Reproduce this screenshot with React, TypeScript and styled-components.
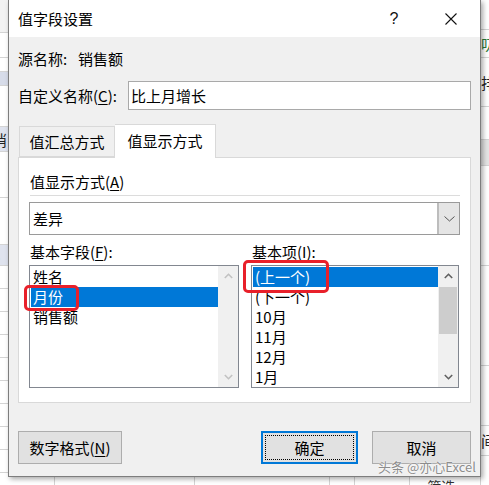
import React from "react";
import styled, { createGlobalStyle } from "styled-components";

const Global = createGlobalStyle`
  html, body { margin: 0; padding: 0; background: #fff; }
  body { font-family: "Noto Sans CJK SC", "Microsoft YaHei", sans-serif; }
  * { box-sizing: border-box; }
`;

const FONT = `"Noto Sans CJK SC", "Microsoft YaHei", sans-serif`;

const Screen = styled.div`
  position: relative;
  width: 489px;
  height: 485px;
  overflow: hidden;
  display: flex;
  background: #fff;
  font-family: ${FONT};
  font-size: 15px;
  color: #000;
`;

/* ---------- background sheet strips ---------- */
const SideStrip = styled.div`
  width: 8px;
  flex-shrink: 0;
  display: flex;
  flex-direction: column;
  overflow: hidden;
`;

const SheetCell = styled.div<{ $h: number; $bg?: string; $color?: string }>`
  height: ${(p) => p.$h}px;
  flex-shrink: 0;
  background: ${(p) => p.$bg || "#fff"};
  border-bottom: 1px solid #d4d4d4;
  font-size: 15px;
  line-height: ${(p) => p.$h}px;
  color: ${(p) => p.$color || "#222"};
  white-space: nowrap;
  overflow: hidden;
`;

const LeftText = styled.span`
  display: inline-block;
  margin-left: -8px;
`;

const Middle = styled.div`
  width: 473px;
  flex-shrink: 0;
  display: flex;
  flex-direction: column;
`;

const BottomStrip = styled.div`
  flex: 1;
  display: flex;
  background: #fff;
  font-size: 14px;
  line-height: 12px;
  color: #333;
`;

const BottomCell = styled.div<{ $w: number }>`
  width: ${(p) => p.$w}px;
  flex-shrink: 0;
  border-right: 1px solid #d4d4d4;
  overflow: hidden;
  white-space: nowrap;
  padding-top: 3px;
`;

/* ---------- dialog ---------- */
const Dialog = styled.div`
  position: relative;
  z-index: 1;
  width: 473px;
  height: 477px;
  flex-shrink: 0;
  background: #f0f0f0;
  border: 1px solid #7d7d7d;
  border-top: none;
  box-shadow: 2px 2px 5px rgba(0, 0, 0, 0.35);
  display: flex;
  flex-direction: column;
`;

const TitleBar = styled.div`
  height: 37px;
  background: #fff;
  display: flex;
  align-items: center;
  padding-left: 9px;
`;

const Title = styled.div`
  font-size: 15px;
  line-height: 20px;
  color: #000;
`;

const HelpBtn = styled.div`
  margin-left: auto;
  width: 30px;
  text-align: center;
  font-size: 16px;
  font-family: "Liberation Sans", Arial, sans-serif;
  color: #111;
`;

const CloseBtn = styled.div`
  width: 46px;
  margin-left: 19px;
  margin-right: 6px;
  display: flex;
  justify-content: center;
  align-items: center;
`;

const Body = styled.div`
  flex: 1;
  display: flex;
  flex-direction: column;
  padding: 0 9px;
`;

const SourceRow = styled.div`
  margin-top: 11px;
  height: 22px;
  display: flex;
  align-items: center;
  line-height: 22px;
`;

const RowLabel = styled.div<{ $w: number }>`
  width: ${(p) => p.$w}px;
  flex-shrink: 0;
  white-space: nowrap;
`;

const NameRow = styled.div`
  margin-top: 11px;
  height: 29px;
  display: flex;
  align-items: center;
`;

const TextInput = styled.div`
  flex: 1;
  height: 29px;
  background: #fff;
  border: 1px solid #a9a9a9;
  padding-left: 2px;
  line-height: 27px;
  font-size: 15px;
`;

const U = styled.span`
  text-decoration: underline;
  text-underline-offset: 2px;
`;

const Tabs = styled.div`
  margin-top: 14px;
  display: flex;
  align-items: flex-end;
  padding-left: 1px;
`;

const Tab = styled.div<{ $active?: boolean; $w: number }>`
  position: relative;
  z-index: ${(p) => (p.$active ? 2 : 1)};
  width: ${(p) => p.$w}px;
  height: ${(p) => (p.$active ? 34 : 31)}px;
  margin-bottom: ${(p) => (p.$active ? -1 : 0)}px;
  background: ${(p) => (p.$active ? "#fff" : "#f0f0f0")};
  border: 1px solid #d9d9d9;
  border-bottom: ${(p) => (p.$active ? "none" : "1px solid #d9d9d9")};
  border-left: ${(p) => (p.$active ? "none" : "1px solid #d9d9d9")};
  display: flex;
  align-items: center;
  justify-content: center;
  padding-bottom: ${(p) => (p.$active ? 2 : 0)}px;
  font-size: 15px;
`;

const Panel = styled.div`
  height: 246px;
  background: #fff;
  border: 1px solid #d9d9d9;
  padding: 0 10px;
  display: flex;
  flex-direction: column;
`;

const PanelLabel = styled.div`
  margin-top: 13px;
  height: 22px;
  line-height: 22px;
  padding-left: 1px;
`;

const Separator = styled.div`
  margin-top: 2px;
  margin-left: 1px;
  height: 1px;
  background: #dcdcdc;
`;

const Combo = styled.div`
  margin-top: 6px;
  height: 33px;
  border: 1px solid #9a9a9a;
  background: #fff;
  display: flex;
`;

const ComboText = styled.div`
  flex: 1;
  padding-left: 3px;
  line-height: 31px;
`;

const ComboBtn = styled.div`
  width: 22px;
  background: #e5e5e5;
  border-left: 2px solid #bdbdbd;
  display: flex;
  align-items: center;
  justify-content: center;
`;

const Columns = styled.div`
  margin-top: 7px;
  display: grid;
  grid-template-columns: 210px 208px;
  column-gap: 12px;
`;

const Column = styled.div`
  display: flex;
  flex-direction: column;
`;

const FieldLabel = styled.div`
  height: 20px;
  line-height: 20px;
  padding-left: 1px;
`;

const ListBox = styled.div`
  margin-top: 3px;
  height: 123px;
  border: 1px solid #828790;
  background: #fff;
  display: flex;
`;

const Items = styled.div`
  flex: 1;
  padding: 1px 0 0 1px;
`;

const Item = styled.div<{ $selected?: boolean }>`
  height: 20px;
  line-height: 20px;
  padding-left: 2px;
  white-space: nowrap;
  background: ${(p) => (p.$selected ? "#0078d7" : "transparent")};
  color: ${(p) => (p.$selected ? "#fff" : "#000")};
`;

const ScrollBar = styled.div`
  width: 20px;
  background: #f0f0f0;
  display: flex;
  flex-direction: column;
`;

const ScrollArrow = styled.div`
  height: 20px;
  display: flex;
  align-items: center;
  justify-content: center;
  flex-shrink: 0;
`;

const ScrollTrack = styled.div`
  flex: 1;
  display: flex;
  flex-direction: column;
  padding-top: 1px;
`;

const Thumb = styled.div`
  height: 47px;
  margin: 0 1px;
  background: #cdcdcd;
`;

const ButtonRow = styled.div`
  margin-top: 28px;
  height: 33px;
  display: flex;
`;

const Button = styled.div<{ $w: number; $default?: boolean; $push?: boolean }>`
  position: relative;
  width: ${(p) => p.$w}px;
  height: 33px;
  margin-left: ${(p) => (p.$push ? "auto" : "0")};
  background: #e1e1e1;
  border: ${(p) => (p.$default ? "2px solid #0078d7" : "1px solid #adadad")};
  display: flex;
  align-items: center;
  justify-content: center;
  font-size: 15px;
  &::after {
    content: "";
    display: ${(p) => (p.$default ? "block" : "none")};
    position: absolute;
    inset: 2px;
    border: 1px dotted #000;
  }
`;

const Gap = styled.div`
  width: 14px;
  flex-shrink: 0;
`;

/* ---------- overlays ---------- */
const RedMark = styled.div`
  position: absolute;
  z-index: 5;
  border: 3px solid #e8202a;
  border-radius: 5px;
`;

const Watermark = styled.div`
  position: absolute;
  z-index: 6;
  left: 378px;
  top: 458px;
  font-size: 13px;
  line-height: 17px;
  color: #8c8c8c;
  white-space: nowrap;
  text-shadow: 0 0 2px #fff, 0 0 1px #fff;
`;

const Chevron = ({ up, color }: { up: boolean; color: string }) => (
  <svg width="9" height="6" viewBox="0 0 9 6">
    <path
      d={up ? "M0.8 5 L4.5 1.3 L8.2 5" : "M0.8 1 L4.5 4.7 L8.2 1"}
      fill="none"
      stroke={color}
      strokeWidth="1.6"
    />
  </svg>
);

const leftCells = [
  { h: 33, bg: "#f2f2f2" },
  { h: 25 },
  { h: 14 },
  { h: 14, bg: "#d7dce9" },
  { h: 41 },
  { h: 25, bg: "#dfe3ee", t: "消" },
  { h: 46 },
  { h: 47 },
  { h: 21, bg: "#dfe3ee", t: "3" },
  { h: 23 },
  { h: 23 },
  { h: 23 },
  { h: 23 },
  { h: 23 },
  { h: 23 },
  { h: 23 },
  { h: 23 },
  { h: 23 },
];

const rightCells = [
  { h: 30 },
  { h: 28, t: "叨", c: "#2a7a3a" },
  { h: 49, t: "排" },
  { h: 33 },
  { h: 26, bg: "#e4e4e4" },
  { h: 100 },
  { h: 100 },
  { h: 60 },
  { h: 30, t: "间" },
  { h: 30 },
];

export default function App() {
  return (
    <Screen>
      <Global />
      <SideStrip>
        {leftCells.map((c, i) => (
          <SheetCell key={i} $h={c.h} $bg={c.bg}>
            {c.t ? <LeftText>{c.t}</LeftText> : null}
          </SheetCell>
        ))}
      </SideStrip>

      <Middle>
        <Dialog>
          <TitleBar>
            <Title>值字段设置</Title>
            <HelpBtn>?</HelpBtn>
            <CloseBtn>
              <svg width="12" height="12" viewBox="0 0 12 12">
                <path d="M0.5 0.5 L11.5 11.5 M11.5 0.5 L0.5 11.5" stroke="#111" strokeWidth="1.1" />
              </svg>
            </CloseBtn>
          </TitleBar>

          <Body>
            <SourceRow>
              <RowLabel $w={60}>源名称:</RowLabel>
              <div>销售额</div>
            </SourceRow>

            <NameRow>
              <RowLabel $w={110}>
                自定义名称(<U>C</U>):
              </RowLabel>
              <TextInput>比上月增长</TextInput>
            </NameRow>

            <Tabs>
              <Tab $w={96}>值汇总方式</Tab>
              <Tab $w={101} $active>
                值显示方式
              </Tab>
            </Tabs>

            <Panel>
              <PanelLabel>
                值显示方式(<U>A</U>)
              </PanelLabel>
              <Separator />
              <Combo>
                <ComboText>差异</ComboText>
                <ComboBtn>
                  <svg width="11" height="6" viewBox="0 0 11 6">
                    <path d="M0.5 0.5 L5.5 5 L10.5 0.5" fill="none" stroke="#555" strokeWidth="1" />
                  </svg>
                </ComboBtn>
              </Combo>

              <Columns>
                <Column>
                  <FieldLabel>
                    基本字段(<U>F</U>):
                  </FieldLabel>
                  <ListBox>
                    <Items>
                      <Item>姓名</Item>
                      <Item $selected>月份</Item>
                      <Item>销售额</Item>
                    </Items>
                    <ScrollBar>
                      <ScrollArrow>
                        <Chevron up color="#c2c2c2" />
                      </ScrollArrow>
                      <ScrollTrack />
                      <ScrollArrow>
                        <Chevron up={false} color="#c2c2c2" />
                      </ScrollArrow>
                    </ScrollBar>
                  </ListBox>
                </Column>

                <Column>
                  <FieldLabel>
                    基本项(<U>I</U>):
                  </FieldLabel>
                  <ListBox>
                    <Items>
                      <Item $selected>(上一个)</Item>
                      <Item>(下一个)</Item>
                      <Item>10月</Item>
                      <Item>11月</Item>
                      <Item>12月</Item>
                      <Item>1月</Item>
                    </Items>
                    <ScrollBar>
                      <ScrollArrow>
                        <Chevron up color="#606060" />
                      </ScrollArrow>
                      <ScrollTrack>
                        <Thumb />
                      </ScrollTrack>
                      <ScrollArrow>
                        <Chevron up={false} color="#606060" />
                      </ScrollArrow>
                    </ScrollBar>
                  </ListBox>
                </Column>
              </Columns>
            </Panel>

            <ButtonRow>
              <Button $w={104}>
                数字格式(<U>N</U>)
              </Button>
              <Button $w={97} $default $push>
                确定
              </Button>
              <Gap />
              <Button $w={99}>取消</Button>
            </ButtonRow>
          </Body>
        </Dialog>

        <BottomStrip>
          <BottomCell $w={47} />
          <BottomCell $w={140} />
          <BottomCell $w={135} />
          <BottomCell $w={25} />
          <BottomCell $w={55} />
          <BottomCell $w={71}>▪ 筛选</BottomCell>
        </BottomStrip>
      </Middle>

      <SideStrip>
        {rightCells.map((c, i) => (
          <SheetCell key={i} $h={c.h} $bg={c.bg} $color={c.c}>
            {c.t || null}
          </SheetCell>
        ))}
      </SideStrip>

      <RedMark style={{ left: 24, top: 285, width: 55, height: 26 }} />
      <RedMark style={{ left: 243, top: 260, width: 86, height: 33 }} />
      <Watermark>头条 @亦心Excel</Watermark>
    </Screen>
  );
}
